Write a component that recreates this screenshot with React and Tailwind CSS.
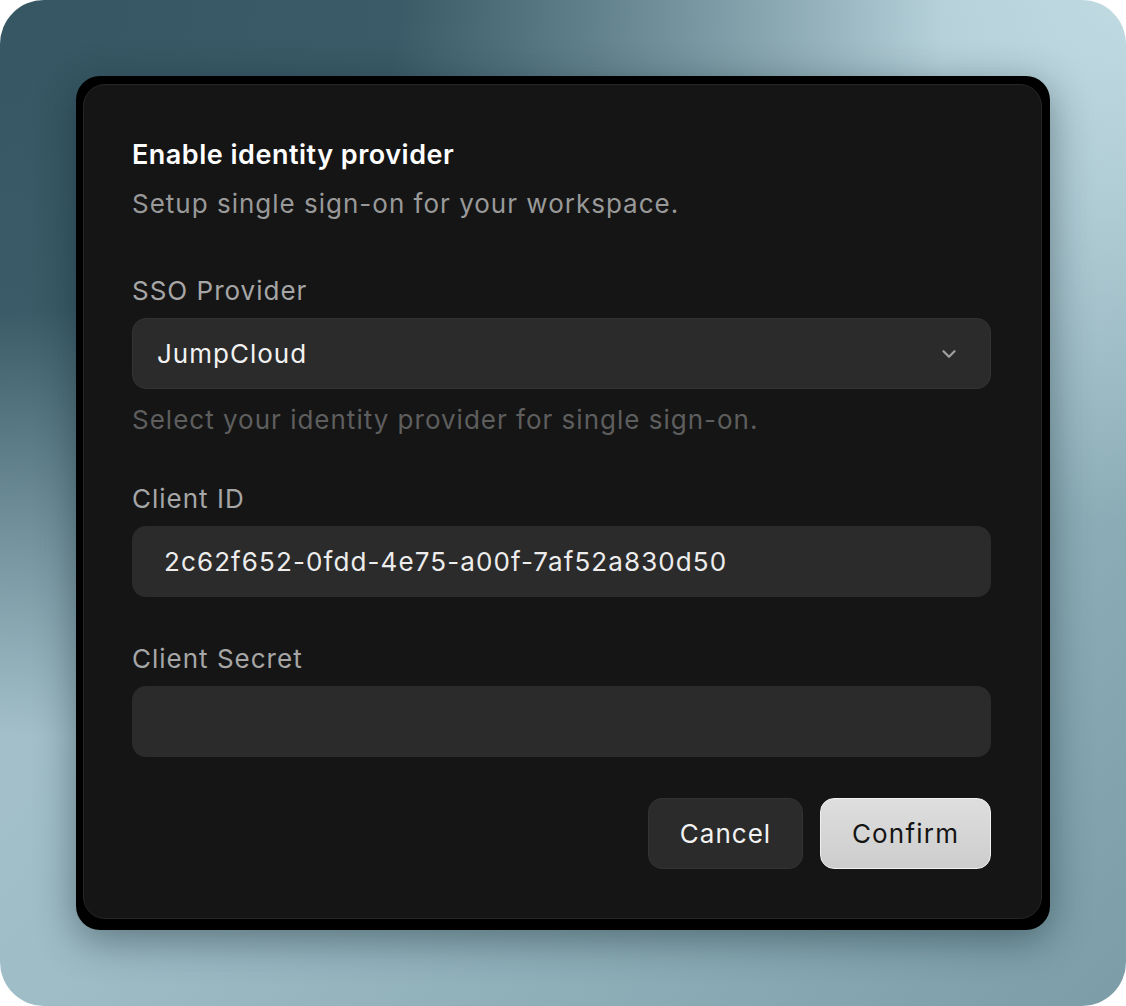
import { ChevronDown } from "lucide-react";

export default function App() {
  return (
    <div className="w-[1126px] h-[1006px] bg-white font-['Inter',sans-serif]">
      <div className="w-full h-full rounded-[44px] flex items-center justify-center bg-[radial-gradient(ellipse_1050px_820px_at_0%_0%,#365663_0%,#3a5b67_38%,rgba(58,91,103,0)_90%),radial-gradient(ellipse_620px_520px_at_100%_0%,#c0dae2_0%,rgba(192,218,226,0)_100%),linear-gradient(135deg,#b0cbd3_0%,#9ebcc6_50%,#7b9da7_100%)]">
        {/* Outer frame */}
        <div className="w-[974px] h-[854px] bg-black rounded-[24px] pt-2 pl-[7px] pr-2 pb-[11px] shadow-[0_10px_40px_rgba(10,30,40,0.45)]">
          <div className="h-full bg-[#151515] border border-[#262626] rounded-[22px] pt-[54px] pl-[48px] pr-[50px]">
            {/* Header */}
            <h2 className="text-[27px] leading-[32px] font-semibold tracking-[0.5px] text-white">
              Enable identity provider
            </h2>
            <p className="mt-[15px] text-[26px] leading-[36px] tracking-[1px] text-[#999999]">
              Setup single sign-on for your workspace.
            </p>

            {/* SSO Provider */}
            <label className="block mt-[51px] text-[26px] leading-[36px] tracking-[1px] text-[#a6a6a6]">
              SSO Provider
            </label>
            <div className="mt-[9px] h-[71px] rounded-[14px] bg-[#2b2b2b] border border-[#333333] flex items-center justify-between pl-6 pr-[30px]">
              <span className="text-[26px] tracking-[1px] text-[#f2f2f2]">JumpCloud</span>
              <ChevronDown className="w-[22px] h-[22px] text-[#a0a0a0]" strokeWidth={2.5} />
            </div>
            <p className="mt-[13px] text-[26px] leading-[36px] tracking-[1px] text-[#5e5e5e]">
              Select your identity provider for single sign-on.
            </p>

            {/* Client ID */}
            <label className="block mt-[43px] text-[26px] leading-[36px] tracking-[1px] text-[#a6a6a6]">
              Client ID
            </label>
            <div className="mt-[9px] h-[71px] rounded-[14px] bg-[#2b2b2b] flex items-center pl-[32px]">
              <span className="text-[26px] tracking-[1.1px] text-[#ededed]">2c62f652-0fdd-4e75-a00f-7af52a830d50</span>
            </div>

            {/* Client Secret */}
            <label className="block mt-[44px] text-[26px] leading-[36px] tracking-[1px] text-[#a6a6a6]">
              Client Secret
            </label>
            <div className="mt-[9px] h-[71px] rounded-[14px] bg-[#2b2b2b]" />

            {/* Actions */}
            <div className="mt-[41px] flex justify-end gap-[17px]">
              <button className="w-[155px] h-[71px] rounded-[14px] bg-[#2b2b2b] border border-[#333333] text-[26px] tracking-[1px] text-[#f2f2f2]">
                Cancel
              </button>
              <button className="w-[171px] h-[71px] rounded-[14px] bg-[linear-gradient(180deg,#dedede,#cdcdcd)] border border-[#f0f0f0] text-[26px] tracking-[1.2px] text-[#141414]">
                Confirm
              </button>
            </div>
          </div>
        </div>
      </div>
    </div>
  );
}
